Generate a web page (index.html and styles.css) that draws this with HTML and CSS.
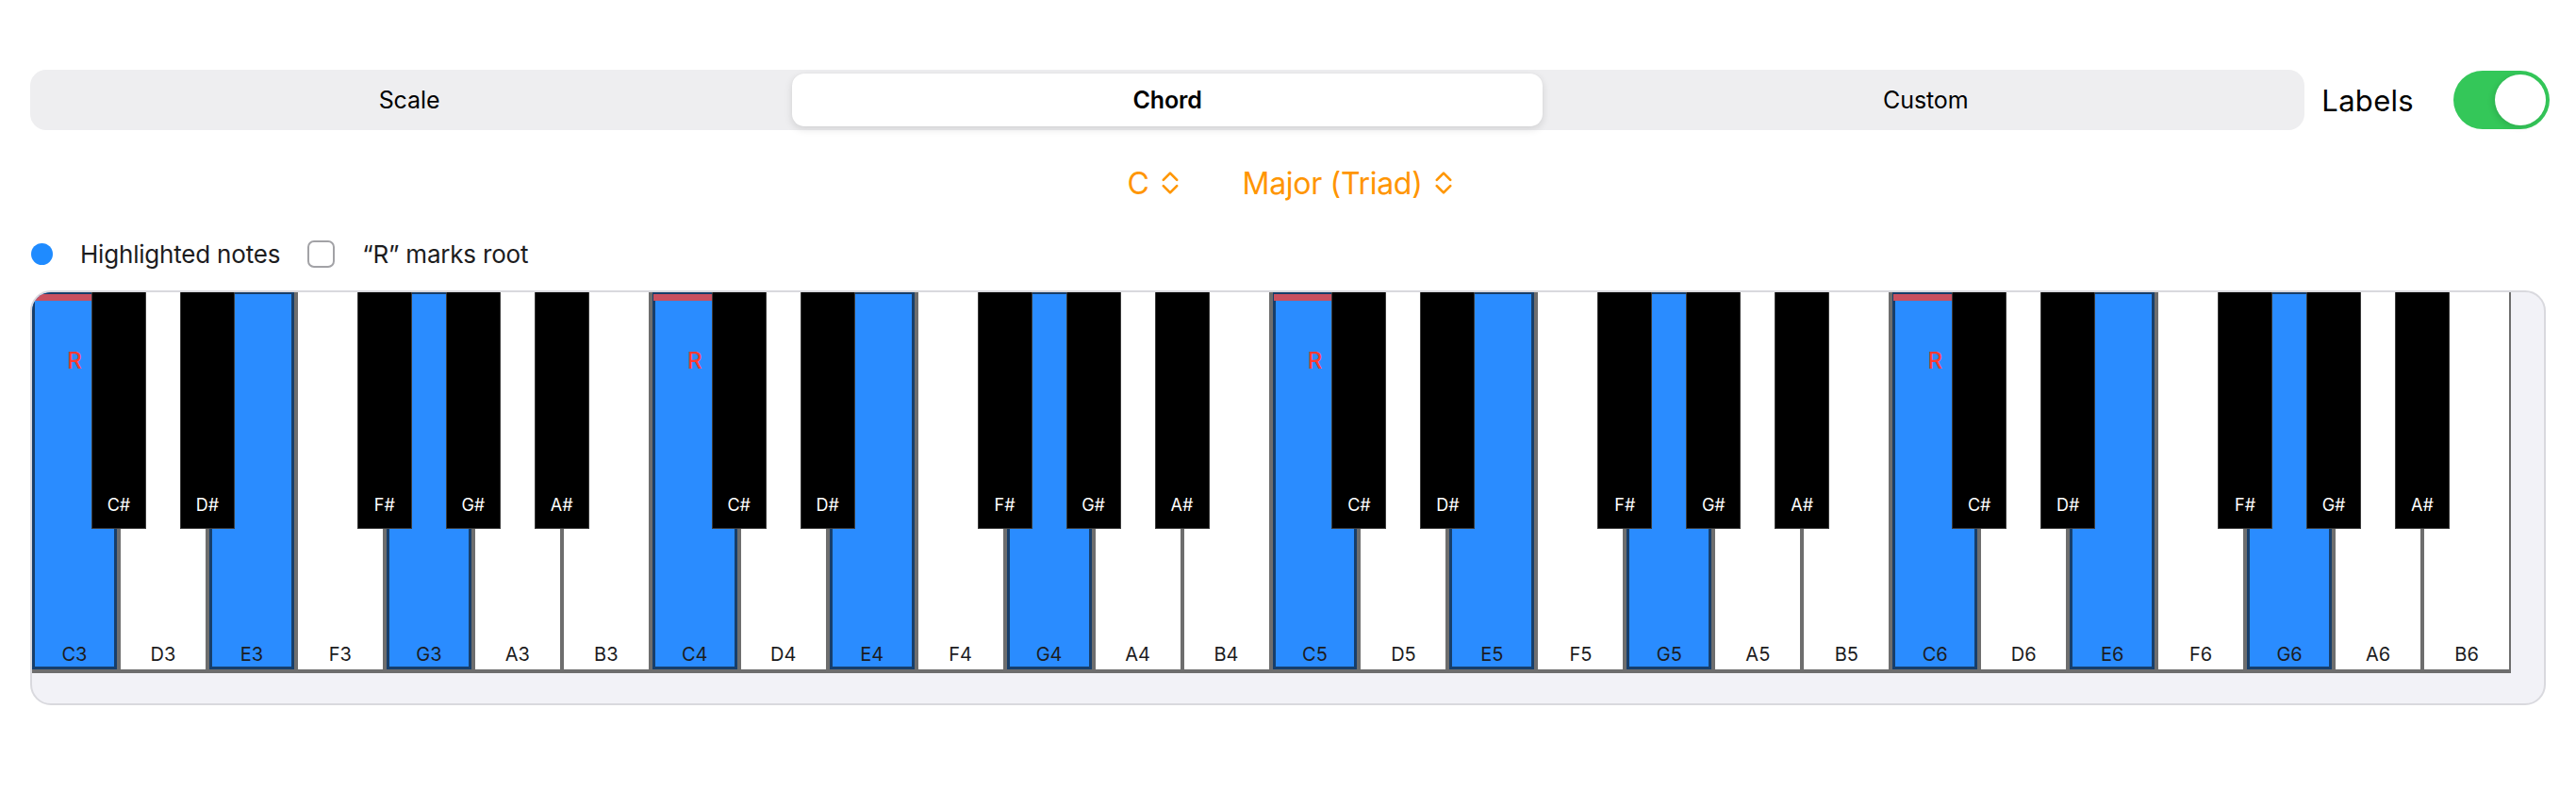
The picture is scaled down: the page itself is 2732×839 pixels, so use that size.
FILE: index.html
```html
<!DOCTYPE html>
<html lang="en">
<head>
<meta charset="utf-8">
<title>Chord</title>
<link rel="stylesheet" href="styles.css">
</head>
<body>
<div class="page">
  <div class="toprow">
    <div class="segmented">
      <div class="seg">Scale</div>
      <div class="seg selected">Chord</div>
      <div class="seg">Custom</div>
    </div>
    <div class="labels-text">Labels</div>
    <div class="toggle"><div class="knob"></div></div>
  </div>

  <div class="pickers">
    <div class="picker">
      <span>C</span>
      <svg class="chev" width="20" height="28" viewBox="0 0 20 28"><path d="M2.8 10.8 L10 3.6 L17.2 10.8 M2.8 17.2 L10 24.4 L17.2 17.2" fill="none" stroke="#ff9500" stroke-width="2.6" stroke-linecap="round" stroke-linejoin="round"/></svg>
    </div>
    <div class="picker">
      <span>Major (Triad)</span>
      <svg class="chev" width="20" height="28" viewBox="0 0 20 28"><path d="M2.8 10.8 L10 3.6 L17.2 10.8 M2.8 17.2 L10 24.4 L17.2 17.2" fill="none" stroke="#ff9500" stroke-width="2.6" stroke-linecap="round" stroke-linejoin="round"/></svg>
    </div>
  </div>

  <div class="legend">
    <div class="dot"></div>
    <span class="legend-text">Highlighted notes</span>
    <div class="checkbox"></div>
    <span class="legend-text">“R” marks root</span>
  </div>

  <div class="piano">
    <div class="keyboard">
      <div class="octave">
        <div class="wkey on"><div class="rbar"></div><span class="r">R</span><span class="lbl">C3</span></div>
        <div class="wkey"><span class="lbl">D3</span></div>
        <div class="wkey on"><span class="lbl">E3</span></div>
        <div class="wkey"><span class="lbl">F3</span></div>
        <div class="wkey on"><span class="lbl">G3</span></div>
        <div class="wkey"><span class="lbl">A3</span></div>
        <div class="wkey"><span class="lbl">B3</span></div>
        <div class="bkey cs"><span>C#</span></div>
        <div class="bkey ds"><span>D#</span></div>
        <div class="bkey fs"><span>F#</span></div>
        <div class="bkey gs"><span>G#</span></div>
        <div class="bkey as"><span>A#</span></div>
      </div>
      <div class="octave">
        <div class="wkey on"><div class="rbar"></div><span class="r">R</span><span class="lbl">C4</span></div>
        <div class="wkey"><span class="lbl">D4</span></div>
        <div class="wkey on"><span class="lbl">E4</span></div>
        <div class="wkey"><span class="lbl">F4</span></div>
        <div class="wkey on"><span class="lbl">G4</span></div>
        <div class="wkey"><span class="lbl">A4</span></div>
        <div class="wkey"><span class="lbl">B4</span></div>
        <div class="bkey cs"><span>C#</span></div>
        <div class="bkey ds"><span>D#</span></div>
        <div class="bkey fs"><span>F#</span></div>
        <div class="bkey gs"><span>G#</span></div>
        <div class="bkey as"><span>A#</span></div>
      </div>
      <div class="octave">
        <div class="wkey on"><div class="rbar"></div><span class="r">R</span><span class="lbl">C5</span></div>
        <div class="wkey"><span class="lbl">D5</span></div>
        <div class="wkey on"><span class="lbl">E5</span></div>
        <div class="wkey"><span class="lbl">F5</span></div>
        <div class="wkey on"><span class="lbl">G5</span></div>
        <div class="wkey"><span class="lbl">A5</span></div>
        <div class="wkey"><span class="lbl">B5</span></div>
        <div class="bkey cs"><span>C#</span></div>
        <div class="bkey ds"><span>D#</span></div>
        <div class="bkey fs"><span>F#</span></div>
        <div class="bkey gs"><span>G#</span></div>
        <div class="bkey as"><span>A#</span></div>
      </div>
      <div class="octave">
        <div class="wkey on"><div class="rbar"></div><span class="r">R</span><span class="lbl">C6</span></div>
        <div class="wkey"><span class="lbl">D6</span></div>
        <div class="wkey on"><span class="lbl">E6</span></div>
        <div class="wkey"><span class="lbl">F6</span></div>
        <div class="wkey on"><span class="lbl">G6</span></div>
        <div class="wkey"><span class="lbl">A6</span></div>
        <div class="wkey"><span class="lbl">B6</span></div>
        <div class="bkey cs"><span>C#</span></div>
        <div class="bkey ds"><span>D#</span></div>
        <div class="bkey fs"><span>F#</span></div>
        <div class="bkey gs"><span>G#</span></div>
        <div class="bkey as"><span>A#</span></div>
      </div>
    </div>
  </div>
</div>
</body>
</html>
```

FILE: styles.css
```css
* { box-sizing: border-box; }
html, body { margin: 0; padding: 0; background: #ffffff; }
body {
  font-family: "Inter", "Liberation Sans", sans-serif;
  color: #000;
  width: 2732px;
  height: 839px;
  overflow: hidden;
}
.page {
  padding: 74px 28px 0 32px;
  display: flex;
  flex-direction: column;
}

/* top row */
.toprow {
  display: flex;
  align-items: center;
  height: 64px;
}
.segmented {
  flex: 1;
  height: 64px;
  background: #eeeef0;
  border-radius: 17px;
  padding: 4px;
  display: grid;
  grid-template-columns: 1fr 1fr 1fr;
  column-gap: 8px;
}
.seg {
  display: flex;
  align-items: center;
  justify-content: center;
  font-size: 25px;
  font-weight: 400;
  letter-spacing: -0.1px;
  border-radius: 13px;
}
.seg.selected {
  background: #ffffff;
  font-weight: 600;
  box-shadow: 0 3px 8px rgba(0,0,0,0.12), 0 0 1px rgba(0,0,0,0.08);
}
.labels-text {
  margin-left: 18px;
  font-size: 31px;
  letter-spacing: 0.3px;
}
.toggle {
  margin-left: 42px;
  width: 102px;
  height: 62px;
  border-radius: 31px;
  background: #34c759;
  padding: 4px;
  display: flex;
  justify-content: flex-end;
}
.knob {
  width: 54px;
  height: 54px;
  border-radius: 50%;
  background: #ffffff;
  box-shadow: -2px 2px 6px rgba(0,0,0,0.12);
}

/* pickers */
.pickers {
  margin-top: 36px;
  height: 40px;
  display: flex;
  justify-content: center;
  align-items: center;
  gap: 67px;
  padding-left: 0;
}
.picker {
  display: flex;
  align-items: center;
  gap: 12px;
  color: #ff9500;
  font-size: 32px;
  letter-spacing: -0.3px;
}
.chev { display: block; }

/* legend */
.legend {
  margin-top: 40px;
  height: 30px;
  display: flex;
  align-items: center;
}
.dot {
  width: 23px;
  height: 23px;
  border-radius: 50%;
  background: #1f8bff;
  margin-left: 1px;
}
.legend-text {
  font-size: 26px;
  color: #1c1c1e;
  letter-spacing: -0.2px;
}
.dot + .legend-text { margin-left: 29px; }
.checkbox {
  width: 29px;
  height: 29px;
  border: 2px solid #a2a2a6;
  border-radius: 7px;
  background: #fff;
  margin-left: 29px;
  margin-right: 29px;
}

/* piano */
.piano {
  margin-top: 24px;
  width: 2668px;
  height: 440px;
  background: #f2f2f7;
  border: 2px solid #d9d9de;
  border-radius: 22px;
  overflow: hidden;
  padding: 0 35px 32px 0;
}
.keyboard {
  display: flex;
  height: 405px;
  margin: -1px 0 0 -2px;
}
.octave {
  flex: 1;
  display: flex;
  position: relative;
}
.wkey {
  flex: 1;
  background: #ffffff;
  border-left: 2px solid #6e6e6e;
  border-right: 2px solid #6e6e6e;
  border-bottom: 4px solid #6e6e6e;
  display: flex;
  flex-direction: column;
  align-items: center;
}
.wkey.on {
  background: #2a8cff;
  box-shadow: inset 0 0 0 3px #173e6a;
}
.rbar {
  align-self: stretch;
  height: 7px;
  margin: 3px 1px 0;
  background: #c9505f;
}
.r {
  margin-top: 50px;
  font-size: 24px;
  line-height: 28px;
  font-weight: 500;
  color: #ff3b30;
}
.lbl {
  margin-top: auto;
  padding-bottom: 4px;
  font-size: 20px;
  line-height: 24px;
  color: #1c1c1e;
}
.bkey {
  position: absolute;
  top: 0;
  width: 58px;
  height: 252px;
  margin-left: -29px;
  background: #000000;
  border: 1px solid #3a3a3a;
  border-top: none;
  display: flex;
  flex-direction: column;
  justify-content: flex-end;
  align-items: center;
  padding-bottom: 13px;
  color: #ffffff;
  font-size: 18px;
  line-height: 22px;
}
.cs { left: calc(100% / 7); }
.ds { left: calc(200% / 7); }
.fs { left: calc(400% / 7); }
.gs { left: calc(500% / 7); }
.as { left: calc(600% / 7); }
```
